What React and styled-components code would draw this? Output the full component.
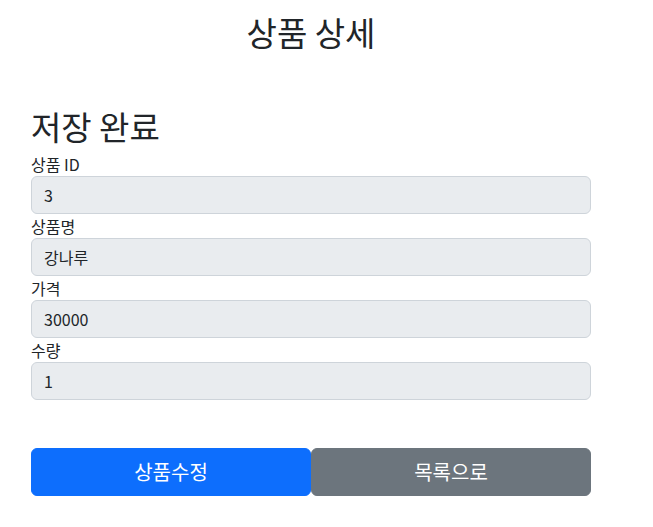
import React from 'react';
import styled, { createGlobalStyle } from 'styled-components';

// item detail page (bootstrap-ish look)
const item = {
  id: 3,
  itemName: '강나루',
  price: 30000,
  quantity: 1
};

const fields = [
  { label: '상품 ID', value: item.id },
  { label: '상품명', value: item.itemName },
  { label: '가격', value: item.price },
  { label: '수량', value: item.quantity }
];

const App = () => {
  return (
    <Container>
      <GlobalStyle />
      <Header>
        <Title>상품 상세</Title>
      </Header>

      <Status>저장 완료</Status>

      <Form>
        {fields.map(field => (
          <Field key={field.label}>
            <Label>{field.label}</Label>
            <Input type="text" value={field.value} readOnly />
          </Field>
        ))}
      </Form>

      <ButtonRow>
        <Button variant="primary" type="button">상품수정</Button>
        <Button variant="secondary" type="button">목록으로</Button>
      </ButtonRow>
    </Container>
  );
};

export default App;

const GlobalStyle = createGlobalStyle`
  * {
    box-sizing: border-box;
  }
  body {
    margin: 0;
    background: #fff;
    color: #212529;
    font-family: 'Noto Sans CJK KR', 'Noto Sans', sans-serif;
    font-size: 16px;
    line-height: 1.5;
  }
`;

const Container = styled.div`
  width: 560px;
  margin-left: 31px;
`;

const Header = styled.div`
  padding-top: 13px;
  text-align: center;
`;

const Title = styled.h2`
  margin: 0;
  font-size: 33px;
  font-weight: 400;
  line-height: 1.2;
`;

const Status = styled.h2`
  margin: 54px 0 6px;
  font-size: 33px;
  font-weight: 400;
  line-height: 1.2;
`;

const Form = styled.div`
  display: flex;
  flex-direction: column;
`;

const Field = styled.div`
  display: flex;
  flex-direction: column;
`;

const Label = styled.label`
  font-size: 16px;
  line-height: 24px;
`;

const Input = styled.input`
  display: block;
  width: 100%;
  height: 38px;
  padding: 6px 12px;
  font-family: inherit;
  font-size: 16px;
  line-height: 1.5;
  color: #212529;
  background: #e9ecef;
  border: 1px solid #ced4da;
  border-radius: 6px;
  outline: none;
`;

const ButtonRow = styled.div`
  display: flex;
  margin-top: 48px;
`;

const Button = styled.button`
  flex: 1;
  height: 48px;
  padding: 8px 16px;
  font-family: inherit;
  font-size: 20px;
  line-height: 1.5;
  color: #fff;
  border: 1px solid ${props => (props.variant === 'primary' ? '#0d6efd' : '#6c757d')};
  background: ${props => (props.variant === 'primary' ? '#0d6efd' : '#6c757d')};
  border-radius: 6px;
  cursor: pointer;
`;
